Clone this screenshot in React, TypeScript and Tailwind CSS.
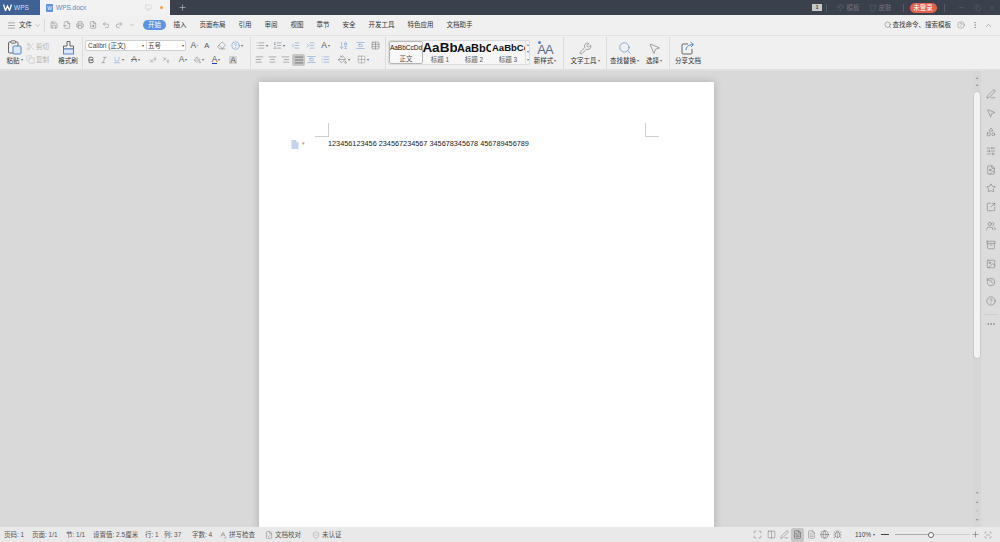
import React from "react";
import {
  Menu, ChevronDown, ChevronUp, Save, FileOutput, Printer, FileSearch, Undo2, Redo2, Minus, Plus, X, Copy, Scissors,
  Eraser, Bold, Italic, Underline, Superscript, Subscript, List, ListOrdered, IndentDecrease,
  IndentIncrease, AlignLeft, AlignCenter, AlignRight, AlignJustify, ArrowDownAZ, Table, Grid2x2, PaintBucket, Wrench, Search,
  MousePointer2, SquareArrowOutUpRight, Monitor, Shirt, Palette, HelpCircle, MoreVertical, MoreHorizontal, PenLine, Shapes, SlidersHorizontal,
  FileImage, Star, Users, Archive, Image, History, ShieldCheck, SpellCheck, FileCheck, Maximize, Columns2, FileText, Globe, Bug,
  AlignVerticalSpaceAround, ScanLine,
} from "lucide-react";

const G = "#595d63";
const BLUE = "#4f86cc";
const I = ({ c: C, s = 10, col = G, w = 1.2 }: { c: any; s?: number; col?: string; w?: number }) => (
  <C size={s} color={col} strokeWidth={w} />
);
const ClipIcon = () => (
  <svg width="15" height="15" viewBox="0 0 15 15" fill="none">
    <rect x="1.5" y="2" width="9.5" height="11" rx="1" stroke="#666" strokeWidth="1" />
    <rect x="4" y="0.8" width="4.5" height="2.4" rx="0.6" fill="#f0f0f0" stroke="#666" strokeWidth="0.9" />
    <rect x="6" y="6" width="8" height="8" rx="1" fill="#dce8f8" stroke={BLUE} strokeWidth="1" />
  </svg>
);
const BrushIcon = () => (
  <svg width="15" height="15" viewBox="0 0 15 15" fill="none">
    <path d="M6 1.5h3v4.5h3.5v3h-10V6H6z" stroke="#666" strokeWidth="1" />
    <rect x="2.5" y="9" width="10" height="5" fill="#dce8f8" stroke={BLUE} strokeWidth="1" />
  </svg>
);
const NewStyleIcon = () => (
  <div className="relative h-[15px] flex items-end text-[13px] leading-[13px] text-[#5c6f8a] tracking-[-1px]">
    AA
    <div className="absolute left-[1px] top-0 w-[3px] h-[3px] rounded-full bg-[#4f86cc]" />
  </div>
);
const ShareIcon = () => (
  <svg width="14" height="14" viewBox="0 0 14 14" fill="none">
    <path d="M7 3H2a1 1 0 0 0-1 1v8a1 1 0 0 0 1 1h8a1 1 0 0 0 1-1V8" stroke="#666" strokeWidth="1" />
    <path d="M5 9c0-3 2-5 7-5.500M9.500 1 12.500 3.500 10 6" stroke={BLUE} strokeWidth="1" />
  </svg>
);
const Caret = () => <span className="ml-[1px] text-[4px] leading-none text-[#666]">▾</span>;
const Slot = ({ w = 13, children, on = false }: { w?: number; children: React.ReactNode; on?: boolean }) => (
  <div
    style={{ width: w }}
    className={`h-[12px] flex items-center justify-center shrink-0 ${on ? "bg-[#c6c6c6] rounded-[2px]" : ""}`}
  >
    {children}
  </div>
);
const Sep = ({ h = "h-[32px]" }: { h?: string }) => <div className={`w-px ${h} bg-[#dcdcdc] shrink-0`} />;
const Tab = ({ t }: { t: string }) => <div className="px-[6.5px] text-[#333]">{t}</div>;
const Big = ({ w, icon, label, caret = false }: { w: number; icon: React.ReactNode; label: string; caret?: boolean }) => (
  <div style={{ width: w }} className="flex flex-col items-center shrink-0">
    <div className="h-[16px] flex items-center justify-center">{icon}</div>
    <div className="text-[6.5px] leading-[9px] whitespace-nowrap text-[#333] flex items-center">
      {label}
      {caret && <Caret />}
    </div>
  </div>
);
const Style = ({ preview, label, cls, active = false }: { preview: string; label: string; cls: string; active?: boolean }) => (
  <div className={`w-[34px] h-full overflow-hidden flex flex-col items-center shrink-0 ${active ? "border border-[#b5b5b5] rounded-[2px] bg-[#f8f8f8]" : ""}`}>
    <div className={`h-[15px] w-full flex items-center overflow-hidden whitespace-nowrap text-[#111] font-['Liberation_Sans',sans-serif] ${cls}`}>{preview}</div>
    <div className="text-[6.5px] leading-[9px] text-[#555]">{label}</div>
  </div>
);
const Side = ({ c }: { c: any }) => (
  <div className="h-[18.8px] flex items-center justify-center">
    <I c={c} s={10} col="#666" w={1.15} />
  </div>
);
const Stat = ({ children, w }: { children: React.ReactNode; w: number }) => (
  <div style={{ width: w }} className="shrink-0 whitespace-nowrap flex items-center gap-[2px]">{children}</div>
);

export default function App() {
  return (
    <div className="w-[1000px] h-[542px] overflow-hidden flex flex-col bg-[#d9d9d9] font-['Liberation_Sans','Noto_Sans_CJK_SC',sans-serif] text-[#444]">
      {/* title bar */}
      <div className="h-[15px] bg-[#3b404d] flex items-center shrink-0 text-[6.5px]">
        <div className="w-[40px] h-full bg-[#3f6195] flex items-center pl-[3px] text-[#d5dfee]">
          <svg width="9" height="7" viewBox="0 0 9 7" fill="none">
            <path d="M0.500 0.500 2.500 6.500 4.500 2 6.500 6.500 8.500 0.500" stroke="#fff" strokeWidth="1.300" />
          </svg>
          <span className="ml-[2px]">WPS</span>
        </div>
        <div className="w-[130px] h-full bg-[#f2f2f2] flex items-center pl-[6px] text-[#5b86c9]">
          <div className="w-[7px] h-[8px] bg-[#5b93e0] rounded-[1px] mr-[3px] text-white text-[5px] leading-[8px] text-center">W</div>
          <span>WPS.docx</span>
          <div className="ml-auto flex items-center">
            <I c={Monitor} s={7} col="#bbb" />
            <div className="w-[3px] h-[3px] rounded-full bg-[#f0a040] ml-[8px] mr-[7px]" />
          </div>
        </div>
        <div className="ml-[8px] text-white">
          <I c={Plus} s={9} col="#ddd" w={1.4} />
        </div>
        <div className="ml-auto flex items-center h-full text-[#6d7280]">
          <div className="w-[10px] h-[7px] bg-[#c9c9c9] text-[#444] text-[5.5px] leading-[7px] text-center mr-[4px] font-bold">1</div>
          <div className="w-px h-[8px] bg-[#555a66] mr-[10px]" />
          <I c={Palette} s={7} col="#6d7280" />
          <span className="ml-[2.5px] w-[13px]">模板</span>
          <div className="ml-[9px]"><I c={Shirt} s={8} col="#6d7280" /></div>
          <span className="ml-[2px] w-[13px]">皮肤</span>
          <div className="w-px h-[8px] bg-[#555a66] ml-[11px] mr-[6px]" />
          <div className="w-[27px] h-[10px] rounded-full bg-[#e0614e] text-white text-center leading-[10px]">未登录</div>
          <div className="w-px h-[8px] bg-[#555a66] ml-[7px] mr-[13px]" />
          <I c={Minus} s={7} col="#6d7280" />
          <div className="ml-[9px]"><I c={Copy} s={7} col="#6d7280" /></div>
          <div className="ml-[7.5px] mr-[4px]"><I c={X} s={8} col="#6d7280" /></div>
        </div>
      </div>

      {/* menu row */}
      <div className="h-[21px] bg-[#f0f0f0] border-b border-[#e2e2e2] flex items-center shrink-0 text-[6.5px] pl-[7px]">
        <I c={Menu} s={9} col="#555" />
        <span className="ml-[3px] text-[#333]">文件</span>
        <div className="ml-[2px]"><I c={ChevronDown} s={7} col="#666" /></div>
        <div className="w-px h-[13px] bg-[#d8d8d8] ml-[3px] mr-[2px]" />
        <Slot w={13}><I c={Save} s={8} /></Slot>
        <Slot w={13}><I c={FileOutput} s={8} /></Slot>
        <Slot w={13}><I c={Printer} s={8} /></Slot>
        <Slot w={13}><I c={FileSearch} s={8} /></Slot>
        <Slot w={13}><I c={Undo2} s={8} /></Slot>
        <Slot w={13}><I c={Redo2} s={8} /></Slot>
        <Slot w={13}><I c={ChevronDown} s={6} /></Slot>
        <div className="ml-[5px] w-[23px] h-[10px] rounded-full bg-[#5b93e0] text-white text-center leading-[10px] mr-[1px]">开始</div>
        <Tab t="插入" />
        <Tab t="页面布局" />
        <Tab t="引用" />
        <Tab t="审阅" />
        <Tab t="视图" />
        <Tab t="章节" />
        <Tab t="安全" />
        <Tab t="开发工具" />
        <Tab t="特色应用" />
        <Tab t="文档助手" />
        <div className="ml-auto flex items-center">
          <I c={Search} s={8} col="#444" />
          <span className="ml-[1px] whitespace-nowrap text-[#333]">查找命令、搜索模板</span>
          <div className="ml-[6px]"><I c={HelpCircle} s={8} col="#666" /></div>
          <div className="ml-[6px]"><I c={MoreVertical} s={8} col="#666" /></div>
          <div className="ml-[5px] mr-[7px]"><I c={ChevronUp} s={9} col="#666" /></div>
        </div>
      </div>

      {/* ribbon */}
      <div className="h-[35px] bg-[#f0f0f0] border-b-2 border-[#dedede] flex items-center shrink-0 text-[6.5px]">
        {/* clipboard */}
        <div className="w-[82px] flex items-start pl-[5px] shrink-0">
          <Big w={19} icon={<ClipIcon />} label="粘贴" caret />
          <div className="w-[30px] ml-[2px] text-[#b0b0b0] flex flex-col gap-[1px] pt-[1px]">
            <div className="flex items-center gap-[1px] h-[12px] whitespace-nowrap"><I c={Scissors} s={9} col="#b0b0b0" />剪切</div>
            <div className="flex items-center gap-[1px] h-[12px] whitespace-nowrap"><I c={Copy} s={9} col="#b0b0b0" />复制</div>
          </div>
          <Big w={24} icon={<BrushIcon />} label="格式刷" />
        </div>
        <Sep />
        {/* font */}
        <div className="w-[167px] shrink-0 flex flex-col gap-[2px] pl-[2px]">
          <div className="flex items-center h-[12px]">
            <div className="w-[101px] h-[11px] bg-white border border-[#cfcfcf] rounded-[2px] flex items-center text-[6.5px] text-[#444] shrink-0">
              <span className="w-[60px] pl-[2px] whitespace-nowrap">Calibri (正文)</span>
              <span className="text-[4px] w-[0px] -ml-[4px]">▾</span>
              <span className="ml-[4px] pl-[1px] flex-1 border-l border-[#dcdcdc] h-full leading-[9px]">五号</span>
              <span className="text-[4px] pr-[1px]">▾</span>
            </div>
            <Slot w={2}><span /></Slot>
            <Slot w={13}><span className="text-[8.5px] text-[#555]">A<sup className="text-[4px] text-[#4f86cc]">+</sup></span></Slot>
            <Slot w={13}><span className="text-[7.5px] text-[#555]">A<sup className="text-[4px] text-[#4f86cc]">-</sup></span></Slot>
            <Slot w={15}><I c={Eraser} s={9} /></Slot>
            <Slot w={15}><I c={HelpCircle} s={9} col={BLUE} /><Caret /></Slot>
          </div>
          <div className="flex items-center h-[12px] text-[8.5px] text-[#555]">
            <Slot w={12}><I c={Bold} s={8} col="#333" w={2} /></Slot>
            <Slot w={14}><I c={Italic} s={8} /></Slot>
            <Slot w={14}><I c={Underline} s={8} col={BLUE} /><Caret /></Slot>
            <Slot w={21}><span className="line-through text-[#666]">A</span><Caret /></Slot>
            <Slot w={14}><I c={Superscript} s={8} /></Slot>
            <Slot w={12}><I c={Subscript} s={8} /></Slot>
            <Slot w={22}><span className="text-[#666]">A</span><Caret /></Slot>
            <Slot w={10}><I c={PaintBucket} s={8} /><Caret /></Slot>
            <Slot w={24}><span className="border-b border-[#2233cc] leading-[8px] text-[#555]">A</span><Caret /></Slot>
            <Slot w={10}><span className="bg-[#d4d4d4] px-[1px] leading-[8px]">A</span></Slot>
          </div>
        </div>
        <Sep />
        {/* paragraph */}
        <div className="w-[134px] shrink-0 flex flex-col gap-[2px] pl-[2px]">
          <div className="flex items-center h-[12px]">
            <Slot w={17}><I c={List} s={9} /><Caret /></Slot>
            <Slot w={17}><I c={ListOrdered} s={9} /><Caret /></Slot>
            <Slot w={17}><I c={IndentDecrease} s={9} col={BLUE} /></Slot>
            <Slot w={13}><I c={IndentIncrease} s={9} col={BLUE} /></Slot>
            <Slot w={17}><span className="text-[8.5px] text-[#555]">A</span><Caret /></Slot>
            <Slot w={18}><I c={ArrowDownAZ} s={9} col={BLUE} /></Slot>
            <Slot w={16}><I c={AlignVerticalSpaceAround} s={9} col={BLUE} /></Slot>
            <Slot w={14}><I c={Table} s={9} /></Slot>
          </div>
          <div className="flex items-center h-[12px]">
            <Slot w={13}><I c={AlignLeft} s={9} /></Slot>
            <Slot w={13}><I c={AlignCenter} s={9} /></Slot>
            <Slot w={13}><I c={AlignRight} s={9} /></Slot>
            <Slot w={13} on><I c={AlignJustify} s={10} col="#333" /></Slot>
            <Slot w={13}><I c={AlignVerticalSpaceAround} s={9} col={BLUE} /></Slot>
            <Slot w={14}><I c={List} s={9} col={BLUE} /></Slot>
            <Slot w={23}><I c={PaintBucket} s={9} /><Caret /></Slot>
            <Slot w={15}><I c={Grid2x2} s={9} col="#888" /><Caret /></Slot>
          </div>
        </div>
        <Sep />
        {/* styles */}
        <div className="w-[177px] shrink-0 flex items-center pl-[2px]">
          <div className="w-[142px] h-[25px] bg-[#f6f6f6] border border-[#dcdcdc] rounded-[2px] flex shrink-0 overflow-hidden">
            <Style preview="AaBbCcDd" label="正文" cls="text-[6.5px] justify-center" active />
            <Style preview="AaBb" label="标题 1" cls="text-[13.5px] font-bold justify-center" />
            <Style preview="AaBbC" label="标题 2" cls="text-[11px] font-bold justify-start" />
            <Style preview="AaBbCc" label="标题 3" cls="text-[9.5px] font-bold justify-start pl-[1px]" />
            <div className="flex-1 border-l border-[#e0e0e0] flex flex-col items-center justify-around text-[4px] text-[#777]">
              <span>▴</span><span>▾</span><span>▾</span>
            </div>
          </div>
          <Big w={30} icon={<NewStyleIcon />} label="新样式" caret />
        </div>
        <Sep />
        <div className="w-[42px] shrink-0 flex justify-center">
          <Big w={42} icon={<I c={Wrench} s={13} w={1} />} label="文字工具" caret />
        </div>
        <Sep />
        <div className="w-[62px] shrink-0 flex">
          <Big w={35} icon={<I c={Search} s={14} col={BLUE} w={1.1} />} label="查找替换" caret />
          <Big w={24} icon={<I c={MousePointer2} s={13} w={1} />} label="选择" caret />
        </div>
        <Sep />
        <Big w={36} icon={<ShareIcon />} label="分享文档" />
      </div>

      {/* body */}
      <div className="flex-1 min-h-0 flex">
        <div className="w-[973px] shrink-0 flex justify-center pt-[11px] overflow-hidden">
          <div className="w-[455px] h-[500px] bg-white shadow-[0_0_8px_rgba(0,0,0,0.22)] shrink-0 pt-[41px]">
            <div className="flex justify-between pl-[56px] pr-[55px]">
              <div className="w-[14px] h-[14px] border-r border-b border-[#cfcfcf]" />
              <div className="w-[14px] h-[14px] border-l border-b border-[#cfcfcf]" />
            </div>
            <div className="flex items-center h-[12px] mt-[1px] pl-[32px]">
              <svg width="8" height="9" viewBox="0 0 8 9">
                <path d="M0.500 0h4.500l2.500 2.500V9h-7z" fill="#c5d4ee" />
                <path d="M5 0v2.500h2.500z" fill="#e6edf8" />
              </svg>
              <span className="text-[5px] text-[#999] ml-[3px] w-[26px]">▾</span>
              <span className="text-[7.3px] leading-none whitespace-nowrap text-[#222]">123456123456 234567234567 345678345678 456789456789</span>
            </div>
          </div>
        </div>
        {/* scrollbar */}
        <div className="w-[8px] shrink-0 bg-[#d6d6d6] flex flex-col items-center">
          <div className="h-[3px]" />
          <div className="text-[4px] text-[#888] leading-[7px]">▴</div>
          <div className="text-[4px] text-[#888] leading-[7px]">▴</div>
          <div className="w-full h-[268px] mt-[3px] bg-[#f3f3f3] border border-[#c9c9c9] rounded-full" />
          <div className="flex-1" />
          <div className="text-[4px] text-[#888] leading-[9px]">▾</div>
          <div className="text-[4px] text-[#888] leading-[9px]">▴</div>
          <div className="text-[4px] text-[#888] leading-[9px]">○</div>
          <div className="text-[4px] text-[#888] leading-[9px] mb-[3px]">▾</div>
        </div>
        {/* side panel */}
        <div className="w-[19px] shrink-0 bg-[#dcdcdc] pt-[14px] flex flex-col">
          <Side c={PenLine} />
          <Side c={MousePointer2} />
          <Side c={Shapes} />
          <Side c={SlidersHorizontal} />
          <Side c={FileImage} />
          <Side c={Star} />
          <Side c={SquareArrowOutUpRight} />
          <Side c={Users} />
          <Side c={Archive} />
          <Side c={Image} />
          <Side c={History} />
          <Side c={HelpCircle} />
          <div className="h-px bg-[#cfcfcf] mx-[2px] mt-[3px]" />
          <Side c={MoreHorizontal} />
        </div>
      </div>

      {/* status */}
      <div className="h-[15px] bg-[#e9e9e9] flex items-center shrink-0 text-[6.5px] text-[#555] pl-[4px] whitespace-nowrap">
        <Stat w={28}>页码: 1</Stat>
        <Stat w={34}>页面: 1/1</Stat>
        <Stat w={27}>节: 1/1</Stat>
        <Stat w={52}>设置值: 2.5厘米</Stat>
        <Stat w={19}>行: 1</Stat>
        <Stat w={28}>列: 37</Stat>
        <Stat w={27}>字数: 4</Stat>
        <Stat w={46}><I c={SpellCheck} s={8} col="#555" />拼写检查</Stat>
        <Stat w={47}><I c={FileCheck} s={8} col="#666" />文档校对</Stat>
        <Stat w={40}><I c={ShieldCheck} s={8} col="#888" />未认证</Stat>
        <div className="ml-auto flex items-center">
          <Slot w={13}><I c={Maximize} s={9} col="#666" /></Slot>
          <Slot w={14}><I c={Columns2} s={9} col="#666" /></Slot>
          <Slot w={13}><I c={PenLine} s={9} col="#666" /></Slot>
          <div className="w-[13px] h-[14px] bg-[#c6c6c6] rounded-[2px] flex items-center justify-center"><I c={FileText} s={9} col="#444" /></div>
          <Slot w={14}><I c={FileText} s={9} col="#777" /></Slot>
          <Slot w={13}><I c={Globe} s={9} col="#555" /></Slot>
          <Slot w={13}><I c={Bug} s={9} col="#666" /></Slot>
          <div className="w-[11px]" />
          <span className="text-[#444] w-[18px]">110%</span>
          <span className="text-[4px] w-[8px]">▾</span>
          <div className="w-[8px] h-px bg-[#444]" />
          <div className="ml-[6px] w-[33px] h-px bg-[#aaa]" />
          <div className="w-[6px] h-[6px] rounded-full border border-[#666] bg-white shrink-0" />
          <div className="w-[36px] h-px bg-[#ccc]" />
          <div className="ml-[1px]"><I c={Plus} s={9} col="#444" /></div>
          <div className="ml-[4px] mr-[8px]"><I c={ScanLine} s={8} col="#666" /></div>
        </div>
      </div>
    </div>
  );
}
